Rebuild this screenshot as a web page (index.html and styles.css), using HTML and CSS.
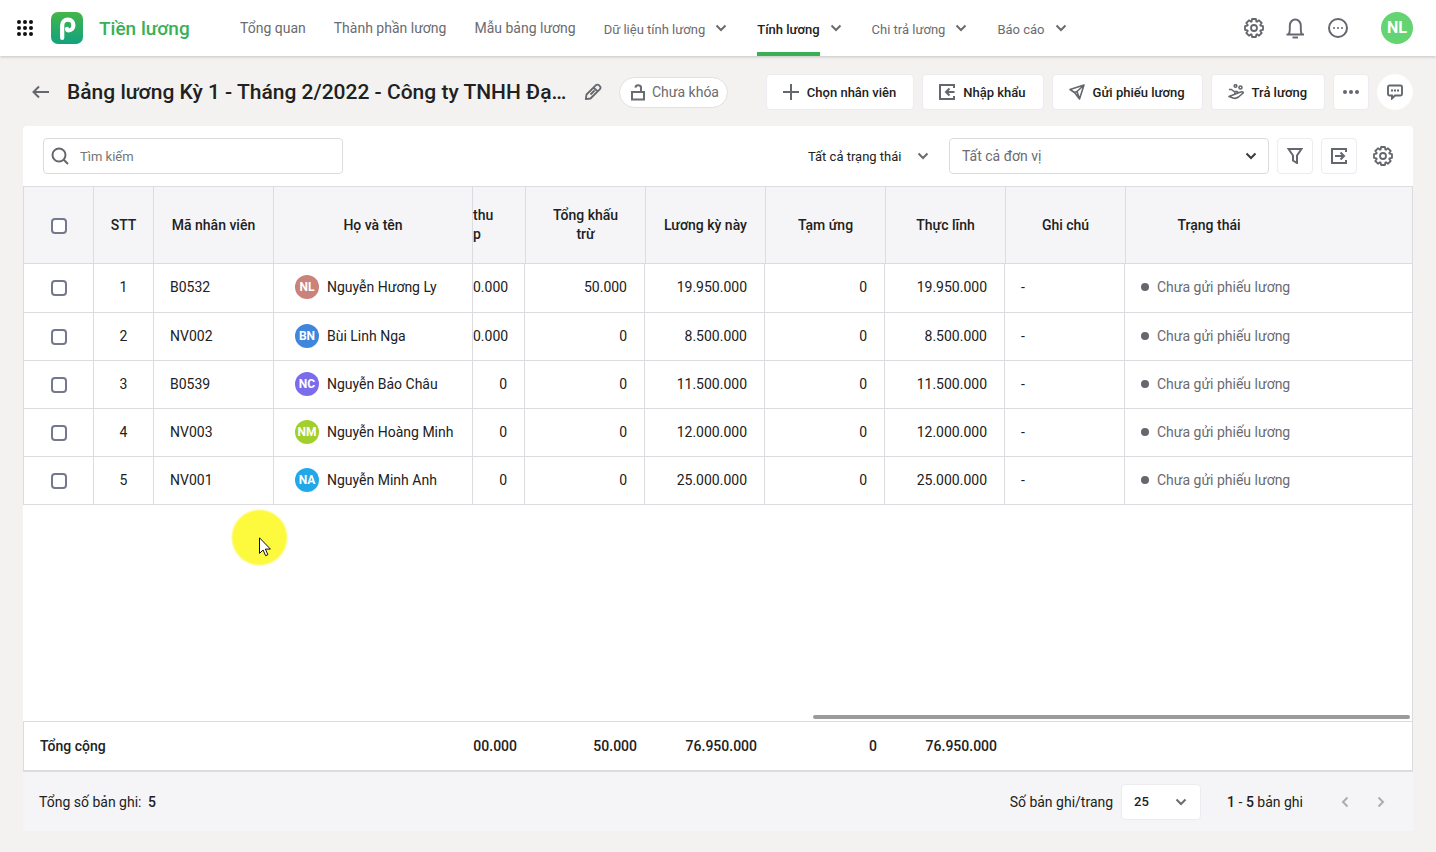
FILE: index.html
```
<!DOCTYPE html>
<html lang="vi">
<head>
    <meta charset="UTF-8">
    <meta name="viewport" content="width=device-width, initial-scale=1.0">
    <title>Tiền lương</title>
    <link rel="stylesheet" href="styles.css">
</head>
<body>
    <!-- shared icons -->
    <svg class="sprite" aria-hidden="true">
        <symbol id="i-chevron" viewBox="0 0 16 16"><path d="M3.500 5.500L8 10l4.500-4.500" fill="none" stroke="currentColor" stroke-width="2"/></symbol>
        <symbol id="i-gear" viewBox="-11 -11 22 22"><g fill="none" stroke="currentColor" stroke-width="1.800" stroke-linejoin="round"><path d="M-2.360-6.480L-1.910-9H1.910L2.360-6.480 2.910-6.250 5.010-7.710 7.710-5.010 6.250-2.910 6.480-2.360 9-1.910V1.910L6.480 2.360 6.250 2.910 7.710 5.010 5.010 7.710 2.910 6.250 2.360 6.480 1.910 9H-1.910L-2.360 6.480-2.910 6.250-5.010 7.710-7.710 5.010-6.250 2.910-6.480 2.360-9 1.910V-1.910L-6.480-2.360-6.250-2.910-7.710-5.010-5.010-7.710-2.910-6.250z"/><circle r="3"/></g></symbol>
    </svg>

    <header class="topbar">
        <button class="plain apps" aria-label="Ứng dụng">
            <svg width="16" height="16" viewBox="0 0 16 16"><g fill="#111"><circle cx="2" cy="2" r="2"/><circle cx="8" cy="2" r="2"/><circle cx="14" cy="2" r="2"/><circle cx="2" cy="8" r="2"/><circle cx="8" cy="8" r="2"/><circle cx="14" cy="8" r="2"/><circle cx="2" cy="14" r="2"/><circle cx="8" cy="14" r="2"/><circle cx="14" cy="14" r="2"/></g></svg>
        </button>
        <svg class="logo" width="32" height="32" viewBox="0 0 32 32">
            <defs><linearGradient id="lg" x1="0" y1="0" x2="0" y2="1"><stop offset="0" stop-color="#44b649"/><stop offset="1" stop-color="#12a280"/></linearGradient></defs>
            <rect width="32" height="32" rx="7" fill="url(#lg)"/>
            <path d="M11.200 26V13.500c0-3.800 2.400-5.800 5.600-5.800 3.500 0 5.600 2.400 5.600 5.500s-2 5.200-4.600 5.200c-1.300 0-1.800-.7-1.800-1.600" fill="none" stroke="#fff" stroke-width="4.200" stroke-linecap="round"/>
        </svg>
        <a href="#" class="brand">Tiền lương</a>
        <nav class="menu">
            <a href="#">Tổng quan</a>
            <a href="#">Thành phần lương</a>
            <a href="#">Mẫu bảng lương</a>
            <a href="#" class="sub"><span>Dữ liệu tính lương</span><svg class="chev"><use href="#i-chevron"/></svg></a>
            <a href="#" class="sub active"><span>Tính lương</span><svg class="chev"><use href="#i-chevron"/></svg></a>
            <a href="#" class="sub"><span>Chi trả lương</span><svg class="chev"><use href="#i-chevron"/></svg></a>
            <a href="#" class="sub"><span>Báo cáo</span><svg class="chev"><use href="#i-chevron"/></svg></a>
        </nav>
        <div class="tools">
            <button class="plain" aria-label="Thiết lập"><svg width="22" height="22"><use href="#i-gear"/></svg></button>
            <button class="plain" aria-label="Thông báo">
                <svg width="22" height="22" viewBox="0 0 22 22" fill="none" stroke="currentColor" stroke-width="1.900"><path d="M1.500 17.500h17.500M3.500 17.500c1-1.500 1.300-3 1.300-5V8.500a5.500 6 0 0 1 11 0v4c0 2 .2 3.500 1.200 5" stroke-linejoin="round"/><path d="M7.500 20.500h5.500"/></svg>
            </button>
            <button class="plain" aria-label="Thêm">
                <svg width="22" height="22" viewBox="0 0 22 22"><circle cx="11" cy="11" r="9" fill="none" stroke="currentColor" stroke-width="2"/><g fill="currentColor"><circle cx="7" cy="11" r="1"/><circle cx="11" cy="11" r="1"/><circle cx="15" cy="11" r="1"/></g></svg>
            </button>
            <span class="user">NL</span>
        </div>
    </header>

    <main>
        <div class="page-head">
            <button class="plain back" aria-label="Quay lại">
                <svg width="18" height="14" viewBox="0 0 18 14" fill="none" stroke="currentColor" stroke-width="2"><path d="M17 7H2M7 1.500L1.500 7 7 12.500"/></svg>
            </button>
            <h1>Bảng lương Kỳ 1 - Tháng 2/2022 - Công ty TNHH Đại Phát</h1>
            <button class="plain edit" aria-label="Sửa">
                <svg width="18" height="18" viewBox="0 0 18 18" fill="none" stroke="currentColor" stroke-width="1.800" stroke-linejoin="round"><path d="M1.800 16.200l.7-4.700 9.200-9.200c1-1 2.300-1 3.200-.1l.9.900c.9.900.9 2.200-.1 3.200l-9.200 9.200zM9.500 4.500l4 4M6.500 11.500l4-4"/></svg>
            </button>
            <span class="lock">
                <svg width="16" height="17" viewBox="0 0 16 17" fill="none" stroke="currentColor" stroke-width="2"><path d="M2 8h12v7.500H2zM11 8V4.500a2.800 2.800 0 0 0-5.600-.8"/></svg>
                Chưa khóa
            </span>
            <div class="actions">
                <button class="btn">
                    <svg width="16" height="16" viewBox="0 0 16 16" stroke="currentColor" stroke-width="2"><path d="M8 0v16M0 8h16"/></svg>
                    Chọn nhân viên
                </button>
                <button class="btn">
                    <svg width="16" height="16" viewBox="0 0 16 16" fill="none" stroke="currentColor" stroke-width="2"><path d="M15 4V1H1v14h14v-3M15.500 8H7M10.500 4.500L7 8l3.500 3.500"/></svg>
                    Nhập khẩu
                </button>
                <button class="btn">
                    <svg width="16" height="16" viewBox="0 0 16 16" fill="none" stroke="currentColor" stroke-width="1.600" stroke-linejoin="round"><path d="M15 1L1 5.500 5.500 8.500 10.500 15zM15 1L8 7.500M5.500 8.500L8 7.500l2.500 7.500"/></svg>
                    Gửi phiếu lương
                </button>
                <button class="btn">
                    <svg width="16" height="16" viewBox="0 0 16 16" fill="none" stroke="currentColor" stroke-width="1.600" stroke-linejoin="round"><circle cx="7.500" cy="2" r="1.300"/><circle cx="12.500" cy="3.500" r="1.500"/><path d="M1 5.500h2.500L6 7.500h3c1.200 0 1.200 1.800 0 1.800H6M10 9l3.800-1.200c1.400-.3 1.800 1 .8 1.700L10.500 13c-2 1.500-3.500 1.700-5.500 1L1 12.500z"/></svg>
                    Trả lương
                </button>
                <button class="btn square" aria-label="Khác">
                    <svg width="16" height="4" viewBox="0 0 16 4" fill="currentColor"><circle cx="2" cy="2" r="2"/><circle cx="8" cy="2" r="2"/><circle cx="14" cy="2" r="2"/></svg>
                </button>
                <button class="btn round" aria-label="Phản hồi">
                    <svg width="16" height="16" viewBox="0 0 16 16"><path d="M2.500 1.500h11A1.500 1.500 0 0 1 15 3v7a1.500 1.500 0 0 1-1.500 1.500H8L5 14.500v-3H2.500A1.500 1.500 0 0 1 1 10V3a1.500 1.500 0 0 1 1.500-1.500z" fill="none" stroke="currentColor" stroke-width="1.900"/><path d="M4 5.500h2v2H4zM7 5.500h2v2H7zM10 5.500h2v2h-2z" fill="currentColor"/></svg>
                </button>
            </div>
        </div>

        <section class="panel">
            <div class="toolbar">
                <label class="search">
                    <svg width="18" height="18" viewBox="0 0 18 18" fill="none" stroke="currentColor" stroke-width="2"><circle cx="8" cy="8" r="6.500"/><path d="M12.500 12.500L17 17"/></svg>
                    <input type="text" placeholder="Tìm kiếm" aria-label="Tìm kiếm">
                </label>
                <div class="select status-select">
                    <select aria-label="Trạng thái"><option>Tất cả trạng thái</option></select>
                    <svg class="chev"><use href="#i-chevron"/></svg>
                </div>
                <div class="select unit-select">
                    <select aria-label="Đơn vị"><option>Tất cả đơn vị</option></select>
                    <svg class="chev"><use href="#i-chevron"/></svg>
                </div>
                <button class="tool-btn" aria-label="Lọc">
                    <svg width="16" height="16" viewBox="0 0 16 16" fill="none" stroke="currentColor" stroke-width="2"><path d="M1.500 1h13L10 7.500V15l-4-2.500v-5z"/></svg>
                </button>
                <button class="tool-btn" aria-label="Xuất khẩu">
                    <svg width="16" height="16" viewBox="0 0 16 16" fill="none" stroke="currentColor" stroke-width="2"><path d="M15 4V1H1v14h14v-3M4 8h9.500M9.500 4.500L13 8l-3.500 3.500"/></svg>
                </button>
                <button class="tool-btn bare" aria-label="Tùy chỉnh cột"><svg width="22" height="22"><use href="#i-gear"/></svg></button>
            </div>

            <div class="grid-body">
                <table class="grid">
                    <colgroup>
                        <col class="c-check"><col class="c-stt"><col class="c-num"><col class="c-name"><col class="c-cut">
                        <col class="c-num"><col class="c-num"><col class="c-num"><col class="c-num"><col class="c-num"><col>
                    </colgroup>
                    <thead>
                        <tr>
                            <th><input type="checkbox" aria-label="Chọn tất cả"></th>
                            <th>STT</th>
                            <th>Mã nhân viên</th>
                            <th>Họ và tên</th>
                            <th class="cut">thu<br>p</th>
                            <th class="scrolled">Tổng khấu<br>trừ</th>
                            <th class="scrolled">Lương kỳ này</th>
                            <th class="scrolled">Tạm ứng</th>
                            <th class="scrolled">Thực lĩnh</th>
                            <th class="scrolled">Ghi chú</th>
                            <th class="scrolled state">Trạng thái</th>
                        </tr>
                    </thead>
                    <tbody>
                        <tr>
                            <td class="mid"><input type="checkbox" aria-label="Chọn B0532"></td>
                            <td class="mid">1</td><td>B0532</td>
                            <td><div class="person"><span class="avatar rose">NL</span>Nguyễn Hương Ly</div></td>
                            <td class="num cut">0.000</td>
                            <td class="num">50.000</td><td class="num">19.950.000</td><td class="num">0</td><td class="num">19.950.000</td>
                            <td>-</td><td><span class="sent">Chưa gửi phiếu lương</span></td>
                        </tr>
                        <tr>
                            <td class="mid"><input type="checkbox" aria-label="Chọn NV002"></td>
                            <td class="mid">2</td><td>NV002</td>
                            <td><div class="person"><span class="avatar blue">BN</span>Bùi Linh Nga</div></td>
                            <td class="num cut">0.000</td>
                            <td class="num">0</td><td class="num">8.500.000</td><td class="num">0</td><td class="num">8.500.000</td>
                            <td>-</td><td><span class="sent">Chưa gửi phiếu lương</span></td>
                        </tr>
                        <tr>
                            <td class="mid"><input type="checkbox" aria-label="Chọn B0539"></td>
                            <td class="mid">3</td><td>B0539</td>
                            <td><div class="person"><span class="avatar violet">NC</span>Nguyễn Bảo Châu</div></td>
                            <td class="num cut">0</td>
                            <td class="num">0</td><td class="num">11.500.000</td><td class="num">0</td><td class="num">11.500.000</td>
                            <td>-</td><td><span class="sent">Chưa gửi phiếu lương</span></td>
                        </tr>
                        <tr>
                            <td class="mid"><input type="checkbox" aria-label="Chọn NV003"></td>
                            <td class="mid">4</td><td>NV003</td>
                            <td><div class="person"><span class="avatar lime">NM</span>Nguyễn Hoàng Minh</div></td>
                            <td class="num cut">0</td>
                            <td class="num">0</td><td class="num">12.000.000</td><td class="num">0</td><td class="num">12.000.000</td>
                            <td>-</td><td><span class="sent">Chưa gửi phiếu lương</span></td>
                        </tr>
                        <tr>
                            <td class="mid"><input type="checkbox" aria-label="Chọn NV001"></td>
                            <td class="mid">5</td><td>NV001</td>
                            <td><div class="person"><span class="avatar sky">NA</span>Nguyễn Minh Anh</div></td>
                            <td class="num cut">0</td>
                            <td class="num">0</td><td class="num">25.000.000</td><td class="num">0</td><td class="num">25.000.000</td>
                            <td>-</td><td><span class="sent">Chưa gửi phiếu lương</span></td>
                        </tr>
                    </tbody>
                </table>
                <div class="scroll-thumb"></div>
                <div class="pointer">
                    <svg width="13" height="20" viewBox="0 0 13 20"><path d="M.5.8v15.600l3.600-3.400 2.500 5.700 2.300-1-2.500-5.600h5z" fill="#fff" stroke="#111"/></svg>
                </div>
            </div>

            <table class="totals">
                <colgroup>
                    <col class="c-check"><col class="c-stt"><col class="c-num"><col class="c-name"><col class="c-cut">
                    <col class="c-num"><col class="c-num"><col class="c-num"><col class="c-num"><col class="c-num"><col>
                </colgroup>
                <tbody>
                    <tr>
                        <th colspan="4" scope="row">Tổng cộng</th>
                        <td class="cut">00.000</td>
                        <td>50.000</td><td>76.950.000</td><td>0</td><td>76.950.000</td><td></td><td></td>
                    </tr>
                </tbody>
            </table>

            <div class="pager">
                <span class="count">Tổng số bản ghi: <b>5</b></span>
                <label for="size">Số bản ghi/trang</label>
                <div class="select size-select">
                    <select id="size"><option>25</option><option>50</option><option>100</option></select>
                    <svg class="chev"><use href="#i-chevron"/></svg>
                </div>
                <span class="range"><b>1</b> - <b>5</b> bản ghi</span>
                <button class="plain page-btn" aria-label="Trang trước"><svg class="chev prev"><use href="#i-chevron"/></svg></button>
                <button class="plain page-btn" aria-label="Trang sau"><svg class="chev next"><use href="#i-chevron"/></svg></button>
            </div>
        </section>
    </main>
</body>
</html>
```

FILE: styles.css
```
* {
    box-sizing: border-box;
}

body {
    margin: 0;
    min-height: 100vh;
    display: flex;
    flex-direction: column;
    background: #f3f2f0;
    color: #212121;
    font-family: Roboto, "Liberation Sans", sans-serif;
    font-size: 14px;
}

button, input, select {
    font: inherit;
    color: inherit;
}

button {
    cursor: pointer;
}

svg {
    display: block;
    flex: none;
}

.sprite {
    position: absolute;
    width: 0;
    height: 0;
}

.plain {
    padding: 0;
    border: 0;
    background: none;
    color: #65676e;
}

.chev {
    width: 16px;
    height: 16px;
    color: #6b6b70;
}

/* top bar */
.topbar {
    display: flex;
    align-items: center;
    height: 56px;
    padding: 0 23px 0 17px;
    background: #fff;
    box-shadow: 0 1px 3px rgba(0, 0, 0, 0.2);
}

.logo {
    margin: 0 16px 0 18px;
}

.brand {
    width: 141px;
    color: #39b054;
    font-size: 19px;
    font-weight: 500;
    text-decoration: none;
}

.menu {
    display: flex;
    align-self: stretch;
    gap: 28px;
}

.menu a {
    display: flex;
    align-items: center;
    color: #6b6b70;
    text-decoration: none;
    white-space: nowrap;
}

.menu .sub {
    gap: 8px;
    font-size: 13px;
}

.menu .sub span {
    height: 56px;
    line-height: 60px;
}

.menu .active span {
    color: #212121;
    font-weight: 500;
    border-bottom: 4px solid #39b054;
}

.tools {
    display: flex;
    align-items: center;
    gap: 20px;
    margin-left: auto;
}

.user {
    width: 32px;
    margin-left: 12px;
    border-radius: 50%;
    background: #63d471;
    color: #fff;
    font-weight: 700;
    font-size: 16px;
    line-height: 32px;
    text-align: center;
}

/* title row */
main {
    flex: 1;
    display: flex;
    flex-direction: column;
    padding: 18px 23px 21px;
}

.page-head {
    display: flex;
    align-items: center;
    height: 36px;
    margin-bottom: 16px;
}

.back {
    margin: 0 17px 0 9px;
}

h1 {
    width: 500px;
    margin: 0;
    overflow: hidden;
    text-overflow: ellipsis;
    white-space: nowrap;
    font-size: 21px;
    font-weight: 500;
}

.edit {
    margin: 0 17px;
}

.lock {
    display: flex;
    align-items: center;
    gap: 6px;
    height: 31px;
    padding: 0 8px 0 10px;
    border: 1px solid #e0e1e6;
    border-radius: 16px;
    background: #fff;
    color: #6b6b70;
    white-space: nowrap;
}

.actions {
    display: flex;
    gap: 8px;
    margin-left: auto;
}

.btn {
    display: flex;
    align-items: center;
    gap: 8px;
    height: 36px;
    padding: 0 16px;
    border: 1px solid #ececf0;
    border-radius: 4px;
    background: #fff;
    font-size: 13px;
    font-weight: 500;
    white-space: nowrap;
}

.btn:not(.square, .round) {
    padding: 0 17px 0 16px;
}

.btn svg {
    color: #65676e;
}

.btn.square, .btn.round {
    width: 36px;
    padding: 0;
    justify-content: center;
}

.btn.round {
    border-color: #fff;
    border-radius: 50%;
}

/* panel */
.panel {
    flex: 1;
    display: flex;
    flex-direction: column;
    border-radius: 4px;
    background: #fff;
    overflow: hidden;
}

.toolbar {
    display: flex;
    align-items: center;
    gap: 8px;
    height: 60px;
    padding: 0 12px 0 20px;
}

.search {
    display: flex;
    align-items: center;
    gap: 11px;
    width: 300px;
    height: 36px;
    margin-right: auto;
    padding: 0 7px;
    border: 1px solid #dcdce0;
    border-radius: 4px;
    color: #65676e;
}

.search input {
    flex: 1;
    min-width: 0;
    padding: 0;
    border: 0;
    outline: 0;
    background: none;
    font-size: 13px;
}

.search input::placeholder {
    color: #757575;
}

.select {
    position: relative;
}

.select select {
    width: 100%;
    height: 36px;
    padding: 0 12px;
    border: 1px solid #dcdce0;
    border-radius: 4px;
    background: #fff;
    appearance: none;
}

.select .chev {
    position: absolute;
    top: 10px;
    right: 10px;
    pointer-events: none;
}

.status-select {
    width: 133px;
}

.status-select select {
    padding: 0;
    border: 0;
    font-size: 13px;
}

.unit-select {
    width: 320px;
}

.unit-select select {
    color: #6b6b70;
}

.unit-select .chev {
    color: #3a3a40;
}

.tool-btn {
    display: flex;
    align-items: center;
    justify-content: center;
    width: 36px;
    height: 36px;
    padding: 0;
    border: 1px solid #ececf0;
    border-radius: 4px;
    background: #fff;
    color: #65676e;
}

.tool-btn.bare {
    border-color: #fff;
}

/* tables */
.grid-body {
    position: relative;
    flex: 1;
    border-right: 1px solid #dcdce0;
}

table {
    width: 100%;
    table-layout: fixed;
    border-spacing: 0;
}

.c-check {
    width: 70px;
}

.c-stt {
    width: 60px;
}

.c-num {
    width: 120px;
}

.c-name {
    width: 199px;
}

.c-cut {
    width: 52px;
}

.grid {
    border-left: 1px solid #dcdce0;
    border-top: 1px solid #dcdce0;
}

.grid th {
    height: 77px;
    padding: 0;
    border-right: 1px solid #dcdce0;
    border-bottom: 1px solid #dcdce0;
    background: #f5f5f8;
    font-weight: 500;
    line-height: 19px;
}

.grid th.cut, .grid th.scrolled {
    border-right: 0;
}

.grid th.cut {
    text-align: left;
}

.grid th.scrolled {
    border-left: 1px solid #dcdce0;
}

.grid th.state {
    padding-right: 120px;
}

.grid td {
    height: 48px;
    padding: 0 16px 2px;
    border-right: 1px solid #dcdce0;
    border-bottom: 1px solid #dcdce0;
    white-space: nowrap;
}

.grid tr:first-child td {
    height: 49px;
}

.grid td:last-child {
    border-right: 0;
}

.grid td.mid {
    padding: 0 0 2px;
    text-align: center;
}

.grid td.num {
    padding-right: 17px;
    text-align: right;
}

/* column half hidden behind the frozen ones */
.grid td.cut, .totals td.cut {
    padding-left: 0;
}

input[type="checkbox"] {
    display: block;
    width: 16px;
    height: 16px;
    margin: 2px auto 0;
    border: 2px solid #74788c;
    border-radius: 4px;
    background: #fff;
    appearance: none;
}

input[type="checkbox"]:checked {
    background: #39b054;
}

.person {
    display: flex;
    align-items: center;
    gap: 8px;
    padding-left: 5px;
}

.avatar {
    width: 24px;
    border-radius: 50%;
    color: #fff;
    font-size: 12px;
    font-weight: 700;
    line-height: 24px;
    text-align: center;
}

.rose { background: #c9837a; }
.blue { background: #3f87dc; }
.violet { background: #7b6cee; }
.lime { background: #a2cf2c; }
.sky { background: #20a8e8; }

.sent {
    display: flex;
    align-items: center;
    gap: 8px;
    color: #6b6b70;
}

.sent::before {
    content: "";
    width: 8px;
    height: 8px;
    border-radius: 50%;
    background: #65676e;
}

.scroll-thumb {
    position: absolute;
    right: 2px;
    bottom: 2px;
    width: 43%;
    height: 4px;
    border-radius: 2px;
    background: #9b9b9b;
}

.pointer {
    position: absolute;
    left: 208px;
    top: 323px;
    width: 57px;
    height: 57px;
    padding: 28px;
    border-radius: 50%;
    background: radial-gradient(closest-side, #fdf93c 92%, rgba(253, 249, 60, 0.2));
}

.totals {
    border: 1px solid #dcdce0;
    border-bottom-width: 2px;
    font-weight: 500;
}

.totals th, .totals td {
    height: 48px;
    padding: 0 8px 0 16px;
    font-weight: 500;
    text-align: right;
}

.totals th {
    text-align: left;
}

/* pager */
.pager {
    display: flex;
    align-items: center;
    height: 59px;
    padding: 0 24px 0 16px;
    background: #f5f5f7;
}

.pager b {
    font-weight: 500;
}

.count {
    margin-right: auto;
}

.count b {
    margin-left: 3px;
}

.size-select {
    width: 80px;
    margin: 0 26px 0 8px;
}

.size-select select {
    border-color: #ececf0;
    font-size: 13px;
    font-weight: 500;
}

.size-select .chev {
    right: 12px;
}

.range {
    margin-right: 34px;
}

.page-btn + .page-btn {
    margin-left: 20px;
}

.page-btn .chev {
    color: #adadad;
}

.prev {
    transform: rotate(90deg);
}

.next {
    transform: rotate(-90deg);
}
```
